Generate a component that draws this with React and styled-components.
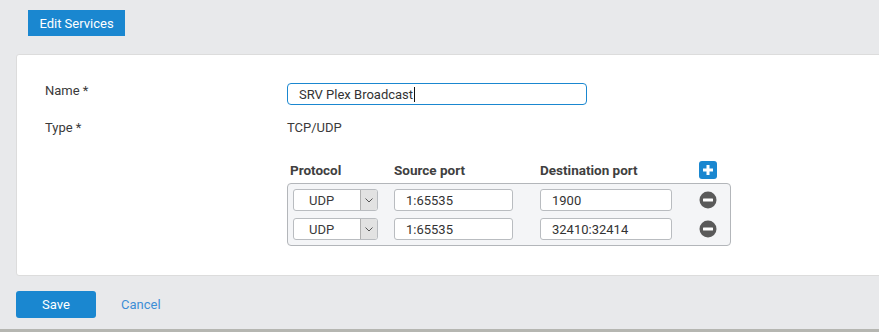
import styled, { createGlobalStyle } from "styled-components";

const Global = createGlobalStyle`
  body {
    margin: 0;
    background: #e8e9eb;
    font-family: Roboto, "Liberation Sans", sans-serif;
    font-size: 13px;
    color: #3a3a3a;
  }
`;

const Page = styled.div`
  height: 332px;
  box-sizing: border-box;
  border-bottom: 3px solid #b5b6b1;
  display: flex;
  flex-direction: column;
  overflow: hidden;
`;

const Top = styled.div`
  padding: 10px 0 0 28px;
`;

const Blue = styled.button`
  background: #1a87d0;
  color: #fff;
  border: none;
  font: inherit;
  font-size: 13px;
  height: ${(p) => p.$h}px;
  width: ${(p) => p.$w}px;
  border-radius: ${(p) => p.$r}px;
  padding: 0;
  cursor: pointer;
`;

const Card = styled.div`
  margin: 18px -10px 0 16px;
  height: 222px;
  box-sizing: border-box;
  background: #fff;
  border: 1px solid #dcdcdc;
  border-top-left-radius: 3px;
  border-bottom-left-radius: 3px;
  padding: 28px 0 0 28px;
`;

const Form = styled.div`
  display: grid;
  grid-template-columns: 242px 1fr;
  row-gap: 15px;
`;

const Label = styled.div`
  line-height: 16px;
  padding-top: ${(p) => p.$pt || 0}px;
`;

const NameField = styled.div`
  width: 300px;
  height: 22px;
  box-sizing: border-box;
  border: 1px solid #1a87d0;
  border-radius: 4px;
  padding-left: 11px;
  display: flex;
  align-items: center;
  color: #333;
`;

const Caret = styled.span`
  display: inline-block;
  width: 1px;
  height: 15px;
  background: #111;
  margin-left: 1px;
`;

const Value = styled.div`
  line-height: 16px;
`;

const Table = styled.div`
  grid-column: 2;
  margin-top: 9px;
`;

const Cols = styled.div`
  display: grid;
  grid-template-columns: 85px 16px 119px 27px 132px 27px 18px;
  align-items: center;
`;

const Head = styled(Cols)`
  padding-left: 6px;
  height: 20px;
  margin-bottom: 3px;
`;

const Th = styled.div`
  font-weight: 700;
  font-size: 13.5px;
  color: #404040;
  margin-left: ${(p) => p.$ml || 0}px;
  white-space: nowrap;
`;

const Group = styled.div`
  width: 444px;
  box-sizing: border-box;
  background: #f4f5f7;
  border: 1px solid #b3b6ba;
  border-radius: 4px;
  padding: 5px;
  display: flex;
  flex-direction: column;
  gap: 7px;
`;

const Select = styled.div`
  height: 22px;
  box-sizing: border-box;
  border: 1px solid #b9bcc0;
  border-radius: 3px;
  background: #fff;
  display: flex;
  overflow: hidden;
`;

const SelText = styled.div`
  flex: 1;
  padding-left: 15px;
  display: flex;
  align-items: center;
`;

const Arrow = styled.div`
  width: 16px;
  background: #e2e2e2;
  border-left: 1px solid #b0b0b0;
  display: flex;
  align-items: center;
  justify-content: center;
`;

const Field = styled.div`
  height: 22px;
  box-sizing: border-box;
  border: 1px solid #b9bcc0;
  border-radius: 3px;
  background: #fff;
  padding-left: 11px;
  display: flex;
  align-items: center;
  color: #333;
`;

const Footer = styled.div`
  display: flex;
  align-items: center;
  padding: 15px 0 0 16px;
  gap: 25px;
`;

const Link = styled.a`
  color: #3d8ed6;
  text-decoration: none;
  cursor: pointer;
`;

const Plus = () => (
  <svg width="18" height="18" viewBox="0 0 18 18">
    <rect width="18" height="18" rx="3" fill="#1a87d0" />
    <path d="M9 4v10M4 9h10" stroke="#fff" strokeWidth="3" />
  </svg>
);

const Minus = () => (
  <svg width="18" height="18" viewBox="0 0 18 18">
    <circle cx="9" cy="9" r="8.5" fill="#5a5a5a" />
    <rect x="4" y="7.5" width="10" height="3" rx="0.5" fill="#fff" />
  </svg>
);

const Chevron = () => (
  <svg width="8" height="5" viewBox="0 0 8 5">
    <path d="M0.5 0.5L4 4L7.5 0.5" fill="none" stroke="#555" strokeWidth="1" />
  </svg>
);

const rows = [
  { proto: "UDP", src: "1:65535", dst: "1900" },
  { proto: "UDP", src: "1:65535", dst: "32410:32414" },
];

const App = () => (
  <Page>
    <Global />
    <Top>
      <Blue $w={97} $h={26} $r={0}>Edit Services</Blue>
    </Top>
    <Card>
      <Form>
        <Label $pt={0}>Name *</Label>
        <NameField>
          SRV Plex Broadcast
          <Caret />
        </NameField>
        <Label>Type *</Label>
        <Value>TCP/UDP</Value>
        <Table>
          <Head>
            <Th $ml={-3}>Protocol</Th>
            <span />
            <Th>Source port</Th>
            <span />
            <Th>Destination port</Th>
            <span />
            <Plus />
          </Head>
          <Group>
            {rows.map((r, i) => (
              <Cols key={i}>
                <Select>
                  <SelText>{r.proto}</SelText>
                  <Arrow>
                    <Chevron />
                  </Arrow>
                </Select>
                <span />
                <Field>{r.src}</Field>
                <span />
                <Field>{r.dst}</Field>
                <span />
                <Minus />
              </Cols>
            ))}
          </Group>
        </Table>
      </Form>
    </Card>
    <Footer>
      <Blue $w={80} $h={27} $r={3}>Save</Blue>
      <Link>Cancel</Link>
    </Footer>
  </Page>
);

export default App;
